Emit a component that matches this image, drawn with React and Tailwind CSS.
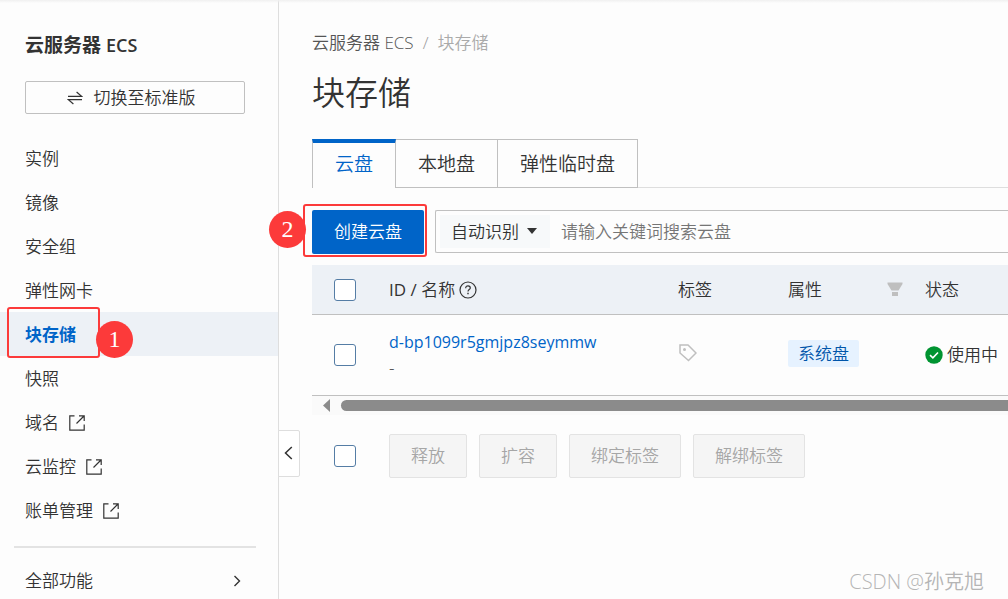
import { useState } from "react";

const NAV_ITEMS = [
  { label: "实例" },
  { label: "镜像" },
  { label: "安全组" },
  { label: "弹性网卡" },
  { label: "块存储", active: true, step: 1 },
  { label: "快照" },
  { label: "域名", external: true },
  { label: "云监控", external: true },
  { label: "账单管理", external: true },
];

const TABS = ["云盘", "本地盘", "弹性临时盘"];

const BATCH_ACTIONS = ["释放", "扩容", "绑定标签", "解绑标签"];

function SwapIcon() {
  return (
    <svg width="16" height="14" viewBox="0 0 16 14" fill="none" stroke="currentColor" strokeWidth="1.2">
      <path d="M1 5.4h13.6L9.6 1" />
      <path d="M15 8.6H1.4l5 4.4" />
    </svg>
  );
}

function ExternalIcon() {
  return (
    <svg width="16" height="16" viewBox="0 0 16 16" fill="none" stroke="currentColor" strokeWidth="1.2">
      <path d="M5.5 .8H.8v14.4h14.4V9.5" />
      <path d="M7.5 8.5L15 1M10 .8h5.2V6" />
    </svg>
  );
}

function HelpIcon() {
  return (
    <svg width="18" height="18" viewBox="0 0 18 18" fill="none" stroke="currentColor" strokeWidth="1.2">
      <circle cx="9" cy="9" r="8" />
      <path d="M6.7 7.2C6.7 5.7 7.7 4.8 9 4.8s2.3.8 2.3 2.1c0 1.7-2.3 1.7-2.3 3.6" />
      <path d="M9 11.8v1.5" strokeWidth="1.4" />
    </svg>
  );
}

function FilterIcon() {
  return (
    <svg width="16" height="15" viewBox="0 0 16 15" fill="#bfbfbf">
      <path d="M.5.5h15V2l-4 6.500h-7L.5 2z" />
      <path d="M5 10h6v4H5z" />
    </svg>
  );
}

function TagIcon() {
  return (
    <svg width="18" height="18" viewBox="0 0 18 18" fill="none" stroke="#bfbfbf" strokeWidth="1.5">
      <path d="M1 1h8l8 8-7.500 7.500L1 9z" />
      <circle cx="5.5" cy="5.5" r="1.5" fill="#bfbfbf" stroke="none" />
    </svg>
  );
}

function CheckCircle() {
  return (
    <svg width="18" height="18" viewBox="0 0 18 18">
      <circle cx="9" cy="9" r="8.7" fill="#009431" />
      <path d="M5 9.200l2.900 2.700L13 6.500" fill="none" stroke="#fff" strokeWidth="1.6" />
    </svg>
  );
}

function Checkbox({ label }) {
  return (
    <input
      type="checkbox"
      aria-label={label}
      className="block size-[22px] appearance-none rounded-[3px] border border-[#557da5] bg-white checked:bg-[#0064c8]"
    />
  );
}

// numbered red dot used by the walkthrough
function Step({ n, className }) {
  return (
    <span
      className={`absolute flex size-[37px] items-center justify-center rounded-full bg-[#fc3a3a] pb-[2px] font-['Liberation_Serif',serif] text-[24px] leading-none font-normal text-white ${className}`}
    >
      {n}
    </span>
  );
}

function Sidebar() {
  return (
    <aside className="relative w-[279px] shrink-0 border-r border-[#dedede]">
      <h2 className="px-[25px] pt-[32px] text-[19px] leading-[26px] font-bold">
        云服务器 <span className="text-[18px] font-semibold">ECS</span>
      </h2>
      <div className="pt-[23px] pr-[33px] pl-[25px]">
        <button className="flex h-[33px] w-full items-center justify-center gap-[11px] rounded-[2px] border border-[#c0c0c0] pr-2">
          <SwapIcon />
          切换至标准版
        </button>
      </div>

      <nav className="mt-[22px]">
        {NAV_ITEMS.map((item) => (
          <div key={item.label} className={`relative ${item.active ? "bg-[#edf1f6]" : ""}`}>
            <a
              href="#"
              className={`flex h-[44px] items-center gap-[10px] pt-[2px] pl-[25px] ${
                item.active ? "font-bold text-[#0064c8]" : ""
              }`}
            >
              {item.label}
              {item.external && <ExternalIcon />}
            </a>
            {item.step && (
              <>
                <span className="absolute -top-[5px] left-[7px] h-[51px] w-[93px] rounded-[3px] border-2 border-[#fc3a3a]" />
                <Step n={item.step} className="top-[9px] left-[96px]" />
              </>
            )}
          </div>
        ))}
      </nav>

      <div className="mt-[14px] mr-[22px] ml-[14px] border-t-2 border-[#e3e3e3]" />
      <a href="#" className="mt-[11px] flex h-[44px] items-center justify-between pr-[37px] pl-[25px]">
        全部功能
        <svg width="8" height="12" viewBox="0 0 8 12" fill="none" stroke="currentColor" strokeWidth="1.4">
          <path d="M1.500 1l5 5-5 5" />
        </svg>
      </a>

      <button
        aria-label="收起导航"
        className="absolute top-[430px] left-[278px] flex h-[47px] w-[22px] items-center justify-center rounded-r-[2px] border border-[#dedede] bg-white pr-[2px] pb-[2px]"
      >
        <svg width="9" height="14" viewBox="0 0 9 14" fill="none" stroke="currentColor" strokeWidth="1.5">
          <path d="M7.800 1L1.500 7l6.300 6" />
        </svg>
      </button>
    </aside>
  );
}

function Tabs() {
  const [current, setCurrent] = useState("云盘");

  return (
    <div role="tablist" className="mt-[20px] flex h-[49px] text-[19px]">
      {TABS.map((tab) => (
        <button
          key={tab}
          role="tab"
          aria-selected={tab === current}
          onClick={() => setCurrent(tab)}
          className={
            tab === current
              ? "border-t-4 border-r border-l border-t-[#0064c8] border-r-[#c0c0c0] border-l-[#c0c0c0] px-[22px] pb-[3px] text-[#0064c8]"
              : "border-t border-r border-b border-[#c0c0c0] px-[22px]"
          }
        >
          {tab}
        </button>
      ))}
      <div className="flex-1 border-b border-[#dedede]" />
    </div>
  );
}

function Toolbar() {
  return (
    <div className="mt-[22px] flex gap-[11px]">
      <div className="relative shrink-0">
        <button className="h-[44px] rounded-[2px] bg-[#0064c8] px-[22px] text-white">创建云盘</button>
        <span className="absolute -top-[6px] -left-[9px] h-[53px] w-[124px] rounded-[3px] border-2 border-[#fc3a3a]" />
        <Step n={2} className="top-[1px] -left-[43px]" />
      </div>
      <div className="flex h-[43px] min-w-0 flex-1 items-center rounded-l-[2px] border border-r-0 border-[#c0c0c0] pl-1">
        <div className="relative shrink-0">
          <select
            aria-label="搜索类型"
            className="h-[33px] w-[110px] appearance-none bg-[#f7f9fa] pl-[11px] outline-none"
          >
            <option>自动识别</option>
          </select>
          <svg
            className="pointer-events-none absolute top-[13px] right-[13px]"
            width="10"
            height="6"
            viewBox="0 0 10 6"
            fill="#333"
          >
            <path d="M0 0h10L5 6z" />
          </svg>
        </div>
        <input
          type="text"
          aria-label="搜索云盘"
          placeholder="请输入关键词搜索云盘"
          className="h-full min-w-0 flex-1 px-[11px] outline-none placeholder:text-[#757575]"
        />
      </div>
    </div>
  );
}

function DiskTable() {
  return (
    <div className="mt-[11px]">
      <table className="w-full min-w-[690px] table-fixed border-separate border-spacing-0 text-left">
        <colgroup>
          <col className="w-[61px]" />
          <col className="w-[289px]" />
          <col className="w-[110px]" />
          <col className="w-[138px]" />
          <col />
        </colgroup>
        <thead>
          <tr className="h-[50px] bg-[#edf1f6] *:border-b *:border-[#c0c0c0] *:font-[350]">
            <th className="pl-[22px]">
              <Checkbox label="全选" />
            </th>
            <th className="px-4">
              <span className="flex items-center gap-1">
                <span>
                  <span className="font-medium">ID /</span> 名称
                </span>
                <HelpIcon />
              </span>
            </th>
            <th className="px-4">标签</th>
            <th className="pr-[7px] pl-4">
              <span className="flex items-center justify-between">
                属性
                <FilterIcon />
              </span>
            </th>
            <th className="pr-4 pl-[15px]">状态</th>
          </tr>
        </thead>
        <tbody>
          <tr className="h-[81px] *:border-b *:border-[#c0c0c0]">
            <td className="pl-[22px]">
              <Checkbox label="d-bp1099r5gmjpz8seymmw" />
            </td>
            <td className="px-4 leading-[25px]">
              <a href="#" className="block text-[16px] font-normal text-[#0064c8]">
                d-bp1099r5gmjpz8seymmw
              </a>
              <span className="block">-</span>
            </td>
            <td className="px-[17px] pb-[4px]">
              <button aria-label="编辑标签" className="block">
                <TagIcon />
              </button>
            </td>
            <td className="px-4 pb-[3px]">
              <span className="block h-[27px] w-fit rounded-[2px] bg-[#e6f2ff] px-[10px] leading-[27px] text-[#0055aa]">
                系统盘
              </span>
            </td>
            <td className="pl-[15px] whitespace-nowrap">
              <span className="flex items-center gap-1">
                <CheckCircle />
                使用中
              </span>
            </td>
          </tr>
        </tbody>
      </table>

      <div className="flex h-[19px] items-center gap-[11px] bg-[#fafafa] pl-[11px]">
        <svg width="7" height="13" viewBox="0 0 7 13" fill="#8b8b8b">
          <path d="M7 0v13L0 6.500z" />
        </svg>
        <div className="h-[11px] flex-1 rounded-l-full bg-[#8b8b8b]" />
      </div>
    </div>
  );
}

export default function App() {
  return (
    <div className="relative flex min-h-screen overflow-hidden bg-[#fdfdfd] font-['Open_Sans','Noto_Sans_CJK_SC',sans-serif] text-[17px] leading-[24px] font-[350] text-[#333]">
      <Sidebar />

      <main className="min-w-0 flex-1 pl-[33px]">
        <nav aria-label="面包屑" className="flex gap-[9px] pt-[31px] text-[#555]">
          <a href="#">云服务器 ECS</a>
          <span className="text-[#999]">/</span>
          <span className="text-[#aaa]">块存储</span>
        </nav>
        <h1 className="mt-[14px] mb-[22px] text-[33px] leading-[48px]">块存储</h1>

        <Tabs />
        <Toolbar />
        <DiskTable />

        <div className="mt-[19px] flex items-center gap-[12px]">
          <div className="pr-[21px] pl-[22px]">
            <Checkbox label="选择全部云盘" />
          </div>
          {BATCH_ACTIONS.map((action) => (
            <button
              key={action}
              disabled
              className="h-[44px] shrink-0 rounded-[2px] border border-[#e3e3e3] bg-[#f5f5f5] px-[21px] text-[#a6a6a6]"
            >
              {action}
            </button>
          ))}
        </div>
      </main>

      <div className="absolute inset-x-0 top-0 h-[3px] bg-linear-to-b from-[#f0f0f0] to-transparent" />
      <div className="absolute right-[24px] bottom-[9px] text-[20px] text-[#b5b5b5]">CSDN @孙克旭</div>
    </div>
  );
}
